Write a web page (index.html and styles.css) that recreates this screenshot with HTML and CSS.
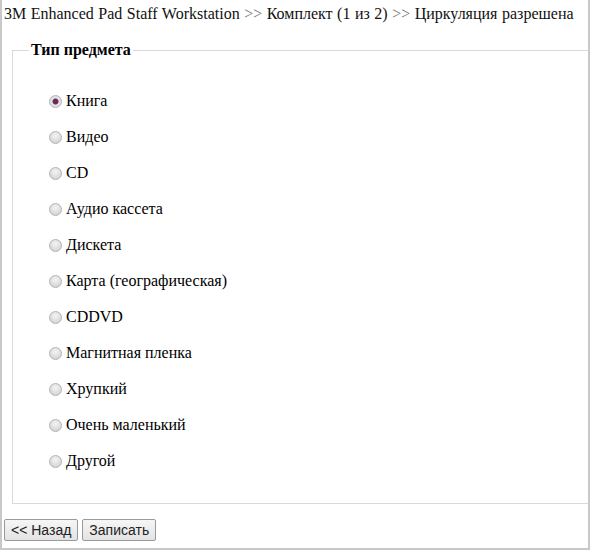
FILE: index.html
```html
<!DOCTYPE html>
<html lang="ru">
  <head>
    <meta charset="UTF-8" />
    <title>Тип предмета</title>
    <link rel="stylesheet" href="styles.css">
  </head>
  <body>
    <div class="frame">
      <div class="crumbs">
        3M Enhanced Pad Staff Workstation <span class="sep">&gt;&gt;</span> Комплект (1 из 2) <span class="sep">&gt;&gt;</span> Циркуляция разрешена
      </div>

      <fieldset class="item-type">
        <legend>Тип предмета</legend>
        <div class="options">
          <label class="option"><input type="radio" name="type" checked /> Книга</label>
          <label class="option"><input type="radio" name="type" /> Видео</label>
          <label class="option"><input type="radio" name="type" /> CD</label>
          <label class="option"><input type="radio" name="type" /> Аудио кассета</label>
          <label class="option"><input type="radio" name="type" /> Дискета</label>
          <label class="option"><input type="radio" name="type" /> Карта (географическая)</label>
          <label class="option"><input type="radio" name="type" /> CDDVD</label>
          <label class="option"><input type="radio" name="type" /> Магнитная пленка</label>
          <label class="option"><input type="radio" name="type" /> Хрупкий</label>
          <label class="option"><input type="radio" name="type" /> Очень маленький</label>
          <label class="option"><input type="radio" name="type" /> Другой</label>
        </div>
      </fieldset>

      <div class="buttons">
        <button>&lt;&lt; Назад</button>
        <button>Записать</button>
      </div>
    </div>
  </body>
</html>
```

FILE: styles.css
```css
html,
body {
  margin: 0;
  padding: 0;
  background: #fff;
}

body {
  font-family: 'Liberation Serif', 'Times New Roman', serif;
  font-size: 16px;
  color: #000;
}

.frame {
  width: 590px;
  height: 550px;
  box-sizing: border-box;
  border: 2px solid #c8c8c8;
  border-top: none;
  overflow: hidden;
  padding: 5px 2px 0 2px;
}

.crumbs {
  line-height: 18px;
  white-space: nowrap;
  color: #111;
  word-spacing: 0.5px;
}

.crumbs .sep {
  color: #777;
}

.item-type {
  margin: 18px -40px 0 8px;
  padding: 0 0 15px 0;
  border: 1px solid #d9d9d9;
  min-width: 0;
}

.item-type legend {
  font-weight: bold;
  padding: 0 2px;
  margin-left: 16px;
  line-height: 18px;
}

.options {
  display: flex;
  flex-direction: column;
  padding: 33px 0 0 36px;
}

.option {
  display: flex;
  align-items: center;
  height: 18px;
  margin-bottom: 18px;
}

.option input {
  appearance: none;
  -webkit-appearance: none;
  width: 13px;
  height: 13px;
  margin: 0 4px 0 0;
  border: 1px solid #b4b4b4;
  border-radius: 50%;
  box-sizing: border-box;
  background: radial-gradient(circle at 50% 35%, #f4f4f4 0%, #dcdcdc 60%, #c9c9c9 100%);
}

.option input:checked {
  background: radial-gradient(circle, #6a2a5c 0, #6a2a5c 2.5px, #e6e6e6 3.5px, #d2d2d2 100%);
}

.buttons {
  display: flex;
  gap: 4px;
  margin-top: 15px;
}

.buttons button {
  font-family: 'Liberation Sans', Arial, sans-serif;
  font-size: 14px;
  height: 22px;
  padding: 0 6px;
  border: 1px solid #9a9a9a;
  border-radius: 2px;
  background: linear-gradient(#f6f6f6, #e3e3e3);
  color: #222;
}
```
